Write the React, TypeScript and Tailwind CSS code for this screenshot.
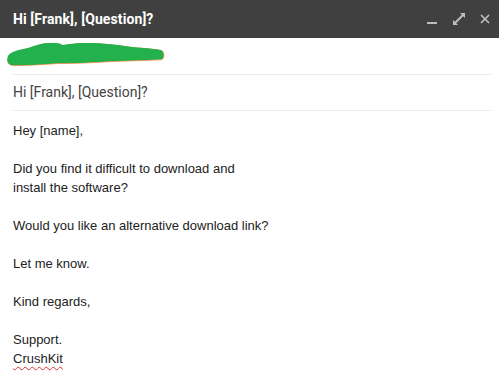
import { X } from "lucide-react";

const scribblePath =
  "M8 18 C 10 14, 18 12, 28 10 C 36 7, 42 5, 50 5 C 56 5, 60 5, 62 7 C 70 6, 76 5, 86 5 C 104 5, 118 7, 132 9 C 146 10, 156 11, 161 12 C 164 14, 164 20, 161 21 C 148 22, 128 22, 110 23 C 92 24, 74 25, 56 25 C 40 26, 26 27, 14 27 C 8 27, 6 24, 8 18 Z";

function Scribble() {
  return (
    <svg width="170" height="30" viewBox="0 0 170 30" className="block">
      <path d={scribblePath} fill="#22b14c" stroke="#e8863a" strokeWidth="0.8" transform="translate(0.6,0.6)" />
      <path d={scribblePath} fill="#22b14c" />
    </svg>
  );
}

function ExpandIcon() {
  return (
    <svg width="14" height="14" viewBox="0 0 14 14" fill="#bdbdbd">
      <path d="M8 1 H13 V6 L11.2 4.2 L4.2 11.2 L6 13 H1 V8 L2.8 9.8 L9.8 2.8 Z" />
    </svg>
  );
}

export default function App() {
  const body = [
    ["Hey [name],"],
    ["Did you find it difficult to download and", "install the software?"],
    ["Would you like an alternative download link?"],
    ["Let me know."],
    ["Kind regards,"],
  ];

  return (
    <div className="w-[499px] h-[381px] bg-white overflow-hidden">
      <div className="h-[38px] bg-[#404040] flex items-center pl-[13px] pr-[7px]">
        <span className="text-white text-[14px] font-bold font-['Roboto',sans-serif] tracking-[0.1px]">
          Hi [Frank], [Question]?
        </span>
        <div className="ml-auto flex items-center">
          <div className="w-[10px] h-[2px] bg-[#bdbdbd] mt-[8px] mr-[15px]" />
          <div className="mr-[12px] flex">
            <ExpandIcon />
          </div>
          <X size={14} strokeWidth={3} color="#bdbdbd" />
        </div>
      </div>

      <div className="h-[36px]">
        <Scribble />
      </div>

      <div className="ml-[13px] mr-[8px] border-t border-[#ebebeb]" />
      <div className="ml-[13px] h-[35px] flex items-center text-[14px] text-[#444] font-['Roboto',sans-serif]">
        Hi [Frank], [Question]?
      </div>
      <div className="ml-[13px] mr-[8px] border-t border-[#ebebeb]" />

      <div className="pl-[13px] pt-[10px] text-[13px] leading-[19px] text-[#222] font-['Liberation_Sans',Arial,sans-serif]">
        {body.map((p, i) => (
          <div key={i} className="mb-[19px]">
            {p.map((l) => (
              <div key={l}>{l}</div>
            ))}
          </div>
        ))}
        <div>
          <div>Support.</div>
          <div className="underline decoration-wavy decoration-[#e03030] decoration-[1px] underline-offset-[3px]">
            CrushKit
          </div>
        </div>
      </div>
    </div>
  );
}
